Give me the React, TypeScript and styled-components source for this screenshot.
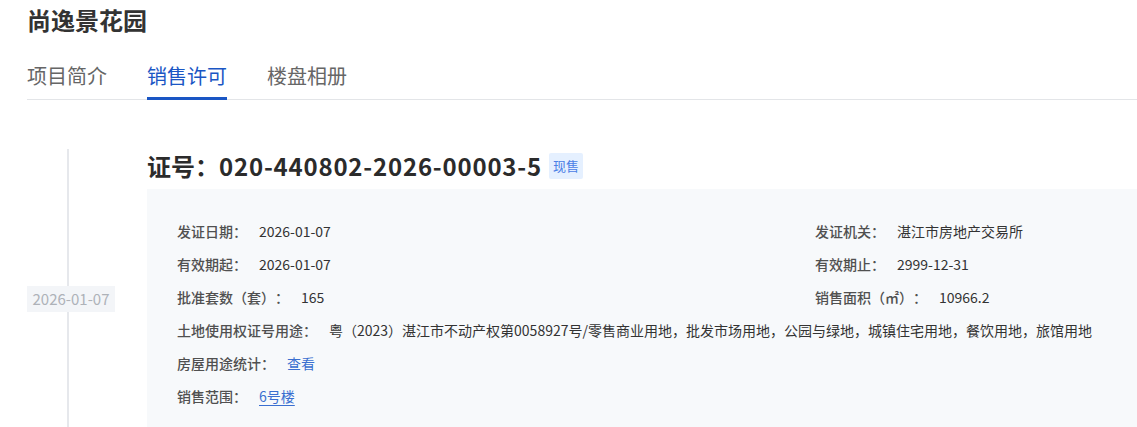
import { FC } from 'react';
import styled, { createGlobalStyle } from 'styled-components';

type Field = { label: string; value: string; link?: boolean; underline?: boolean; wide?: boolean };

const fields: Field[] = [
  { label: '发证日期：', value: '2026-01-07' },
  { label: '发证机关：', value: '湛江市房地产交易所' },
  { label: '有效期起：', value: '2026-01-07' },
  { label: '有效期止：', value: '2999-12-31' },
  { label: '批准套数（套）：', value: '165' },
  { label: '销售面积（㎡）：', value: '10966.2' },
  {
    label: '土地使用权证号用途：',
    value:
      '粤（2023）湛江市不动产权第0058927号/零售商业用地，批发市场用地，公园与绿地，城镇住宅用地，餐饮用地，旅馆用地',
    wide: true,
  },
  { label: '房屋用途统计：', value: '查看', link: true, wide: true },
  { label: '销售范围：', value: '6号楼', link: true, underline: true, wide: true },
];

const tabs = ['项目简介', '销售许可', '楼盘相册'];

const Row: FC<{ field: Field }> = ({ field }) => (
  <FieldRow $wide={field.wide}>
    <Label>{field.label}</Label>
    <Value $link={field.link} $underline={field.underline}>
      {field.value}
    </Value>
  </FieldRow>
);

export default function App() {
  return (
    <Page>
      <GlobalStyle />
      <Title>尚逸景花园</Title>
      <Tabs>
        {tabs.map((t) => (
          <Tab key={t} $active={t === '销售许可'}>
            {t}
          </Tab>
        ))}
      </Tabs>
      <Timeline>
        <Item>
          <Rail>
            <DateTag>2026-01-07</DateTag>
          </Rail>
          <Body>
            <Heading>
              证号：<Code>020-440802-2026-00003-5</Code>
              <Badge>现售</Badge>
            </Heading>
            <Card>
              {fields.map((f) => (
                <Row key={f.label} field={f} />
              ))}
            </Card>
          </Body>
        </Item>
      </Timeline>
    </Page>
  );
}

const GlobalStyle = createGlobalStyle`
  body {
    margin: 0;
    background: #fff;
    font-family: "Noto Sans CJK SC", "Noto Sans", sans-serif;
    color: #333;
    text-spacing-trim: space-all;
  }
`;

const Page = styled.div`
  padding: 4px 0 0 27px;
  overflow: hidden;
  height: 427px;
  box-sizing: border-box;
`;

const Title = styled.h1`
  margin: 0;
  font-size: 24px;
  line-height: 32px;
  font-weight: 700;
  color: #333;
`;

const Tabs = styled.div`
  display: flex;
  gap: 40px;
  margin-top: 26px;
  border-bottom: 1px solid #e3e5e8;
`;

const Tab = styled.div<{ $active?: boolean }>`
  font-size: 20px;
  line-height: 28px;
  padding-bottom: 7px;
  margin-bottom: -1px;
  color: ${(p) => (p.$active ? '#1a56c4' : '#666')};
  border-bottom: 3px solid ${(p) => (p.$active ? '#1a56c4' : 'transparent')};
`;

const Timeline = styled.div`
  margin-top: 49px;
`;

const Item = styled.div`
  display: flex;
`;

const Rail = styled.div`
  width: 88px;
  flex: 0 0 auto;
  display: flex;
  align-items: center;
  justify-content: center;
  padding-top: 6px;
  background: linear-gradient(#e6e8ec, #e6e8ec) no-repeat 40px 0 / 2px 100%;
`;

const DateTag = styled.div`
  width: 88px;
  height: 26px;
  line-height: 26px;
  text-align: center;
  font-size: 15px;
  color: #aeb2b8;
  background: #f3f5f8;
`;

const Body = styled.div`
  flex: 1 1 auto;
  margin-left: 32px;
`;

const Heading = styled.div`
  display: flex;
  align-items: center;
  font-size: 24px;
  line-height: 34px;
  font-weight: 700;
  color: #2b2b2b;
  margin-bottom: 6px;
`;

const Code = styled.span`
  letter-spacing: 0.8px;
`;

const Badge = styled.span`
  margin-left: 7px;
  height: 26px;
  line-height: 26px;
  padding: 0 4px;
  font-size: 13px;
  font-weight: 400;
  letter-spacing: 0;
  color: #4b80e6;
  background: #e5f0ff;
  border-radius: 2px;
`;

const Card = styled.div`
  background: #f7f9fb;
  padding: 25px 30px 30px;
  display: grid;
  grid-template-columns: 638px 1fr;
`;

const FieldRow = styled.div<{ $wide?: boolean }>`
  display: flex;
  align-items: center;
  height: 33px;
  white-space: nowrap;
  grid-column: ${(p) => (p.$wide ? '1 / -1' : 'auto')};
`;

const Label = styled.span`
  font-size: 14px;
  font-weight: 500;
  color: #505050;
  margin-right: 12px;
`;

const Value = styled.span<{ $link?: boolean; $underline?: boolean }>`
  font-size: 14px;
  color: ${(p) => (p.$link ? '#3a6fd0' : '#333')};
  text-decoration: ${(p) => (p.$underline ? 'underline' : 'none')};
  text-underline-offset: 3px;
`;
